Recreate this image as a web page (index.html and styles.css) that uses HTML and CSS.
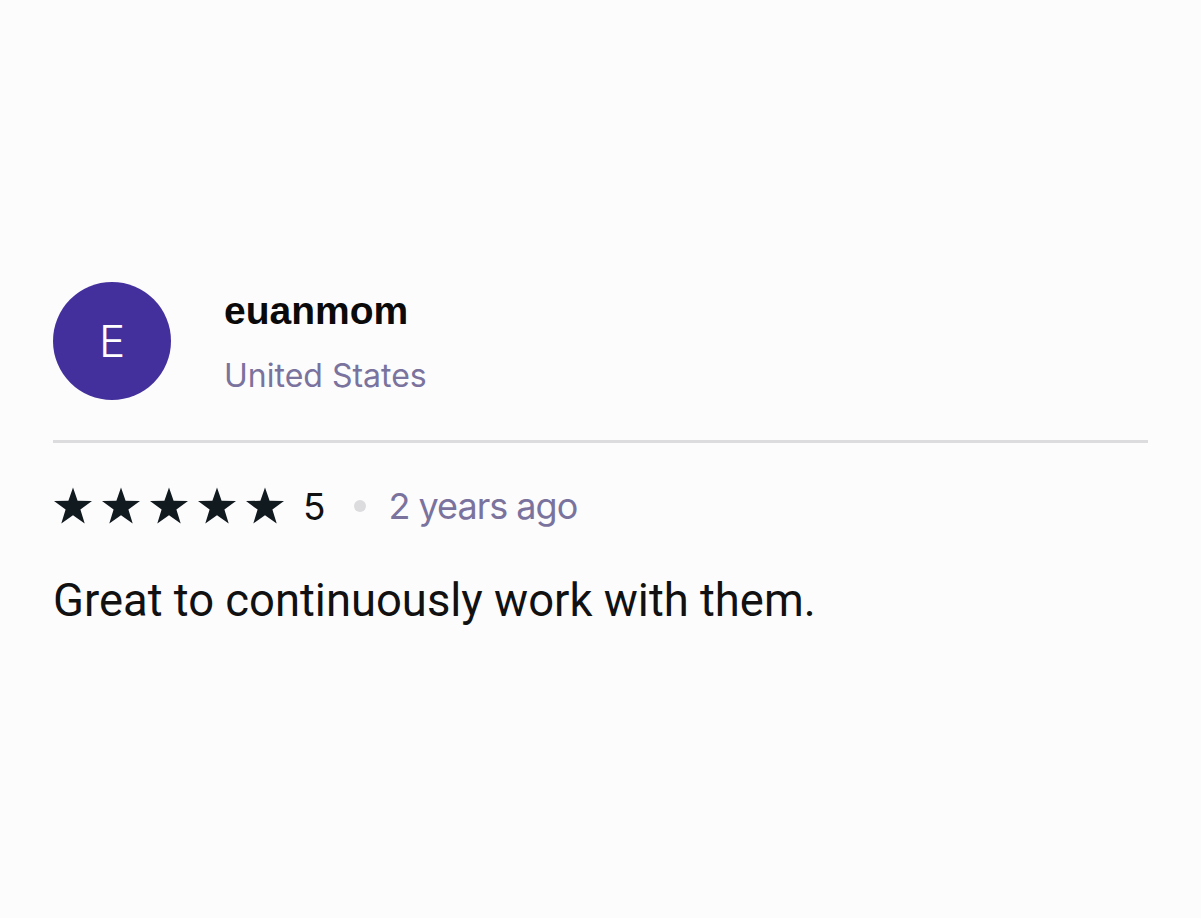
FILE: index.html
```html
<!DOCTYPE html>
<html>
<head>
<meta charset="utf-8">
<link rel="stylesheet" href="styles.css">
</head>
<body>
<div class="review">
  <div class="header">
    <div class="avatar">E</div>
    <div class="who">
      <div class="name">euanmom</div>
      <div class="country">United States</div>
    </div>
  </div>
  <div class="divider"></div>
  <div class="meta">
    <div class="stars">
      <svg class="star" viewBox="0 0 40 40"><path d="M20 1.5l4.6 13.3 14.4.2-11.6 8.6 4.3 13.9L20 29.2 8.3 37.5l4.3-13.9L1 15l14.4-.2z"/></svg>
      <svg class="star" viewBox="0 0 40 40"><path d="M20 1.5l4.6 13.3 14.4.2-11.6 8.6 4.3 13.9L20 29.2 8.3 37.5l4.3-13.9L1 15l14.4-.2z"/></svg>
      <svg class="star" viewBox="0 0 40 40"><path d="M20 1.5l4.6 13.3 14.4.2-11.6 8.6 4.3 13.9L20 29.2 8.3 37.5l4.3-13.9L1 15l14.4-.2z"/></svg>
      <svg class="star" viewBox="0 0 40 40"><path d="M20 1.5l4.6 13.3 14.4.2-11.6 8.6 4.3 13.9L20 29.2 8.3 37.5l4.3-13.9L1 15l14.4-.2z"/></svg>
      <svg class="star" viewBox="0 0 40 40"><path d="M20 1.5l4.6 13.3 14.4.2-11.6 8.6 4.3 13.9L20 29.2 8.3 37.5l4.3-13.9L1 15l14.4-.2z"/></svg>
    </div>
    <span class="score">5</span>
    <span class="dot"></span>
    <span class="ago">2 years ago</span>
  </div>
  <p class="text">Great to continuously work with them.</p>
</div>
</body>
</html>
```

FILE: styles.css
```css
html, body {
  margin: 0;
  padding: 0;
  background: #fdfcfd;
}
body {
  width: 1201px;
  height: 918px;
}
.review {
  padding: 282px 53px 0 53px;
}
.header {
  display: flex;
  align-items: flex-start;
  gap: 53px;
}
.avatar {
  width: 118px;
  height: 118px;
  border-radius: 50%;
  background: #44309c;
  color: #ffffff;
  display: flex;
  align-items: center;
  justify-content: center;
  font-family: "Inter", sans-serif;
  font-size: 44px;
  font-weight: 300;
  flex-shrink: 0;
}
.who {
  display: flex;
  flex-direction: column;
  padding-top: 6px;
}
.name {
  font-family: "Liberation Sans", Arial, sans-serif;
  font-weight: 700;
  font-size: 39px;
  line-height: 46px;
  color: #0a0a0a;
}
.country {
  margin-top: 23px;
  font-family: "Inter", sans-serif;
  font-size: 32px;
  line-height: 38px;
  color: #7a739d;
}
.divider {
  margin-top: 40px;
  height: 3px;
  background: #dcdbdd;
}
.meta {
  display: flex;
  align-items: center;
  margin-top: 41px;
  height: 44px;
}
.stars {
  display: flex;
  gap: 8px;
}
.star {
  width: 40px;
  height: 40px;
  fill: #111a1f;
}
.score {
  margin-left: 18px;
  font-family: "Inter", sans-serif;
  font-size: 37px;
  color: #111111;
}
.dot {
  width: 12px;
  height: 12px;
  border-radius: 50%;
  background: #dcdbdd;
  margin-left: 28px;
}
.ago {
  margin-left: 23px;
  font-family: "Inter", sans-serif;
  font-size: 36px;
  letter-spacing: -1px;
  color: #7a739d;
}
.text {
  margin: 45px 0 0 0;
  font-family: "Roboto", sans-serif;
  font-size: 45.4px;
  line-height: 56px;
  color: #111111;
}
```
